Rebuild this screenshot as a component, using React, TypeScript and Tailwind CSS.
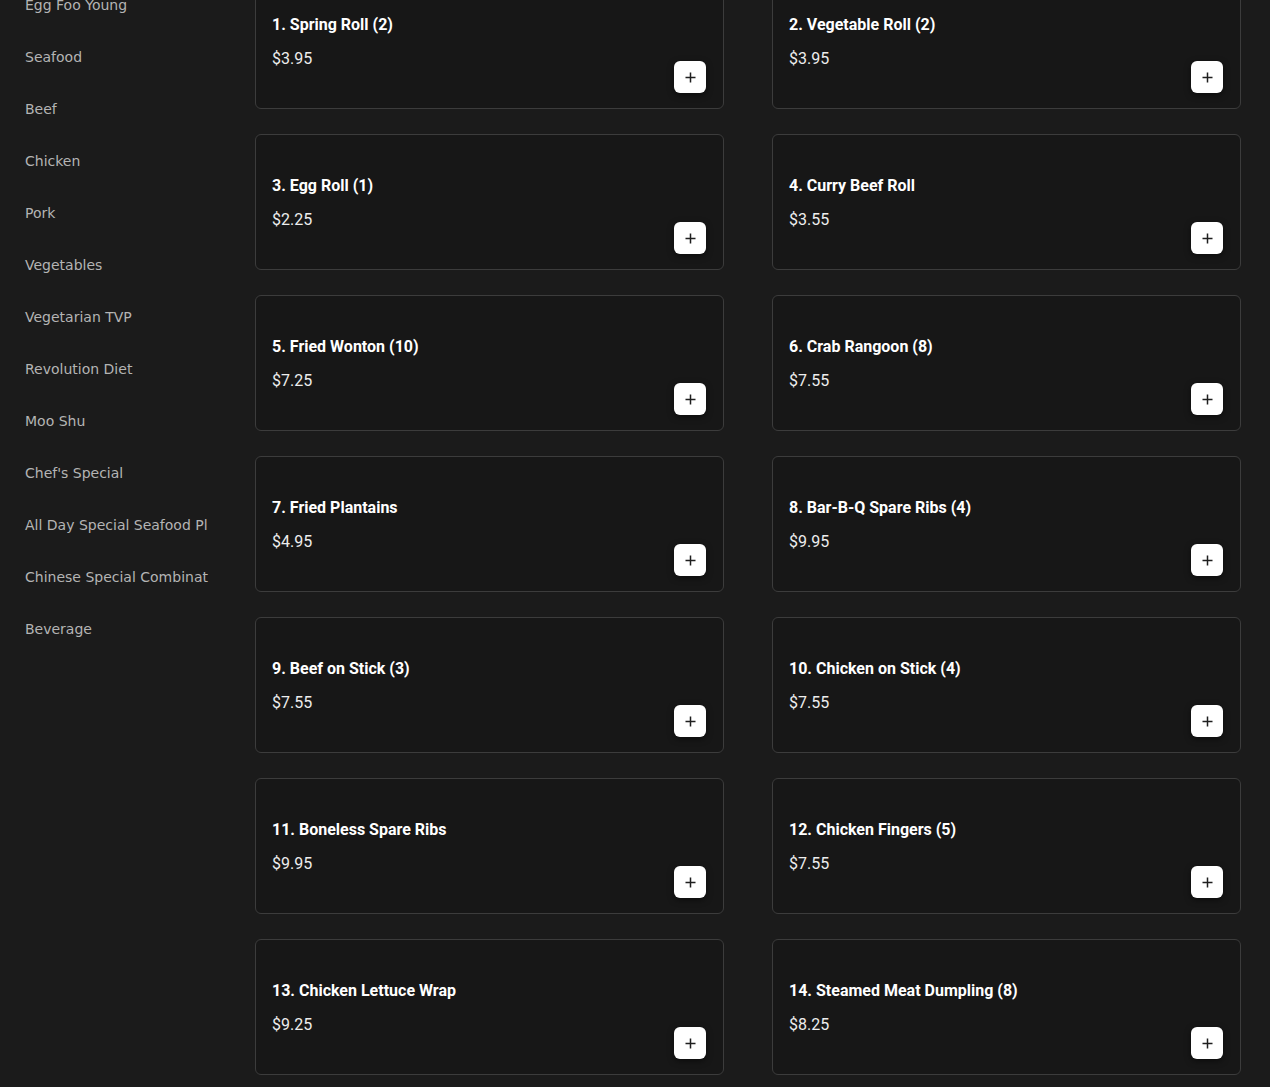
const categories = [
  'Egg Foo Young',
  'Seafood',
  'Beef',
  'Chicken',
  'Pork',
  'Vegetables',
  'Vegetarian TVP',
  'Revolution Diet',
  'Moo Shu',
  "Chef's Special",
  'All Day Special Seafood Pl',
  'Chinese Special Combinat',
  'Beverage',
];

const items = [
  { name: '1. Spring Roll (2)', price: '$3.95' },
  { name: '2. Vegetable Roll (2)', price: '$3.95' },
  { name: '3. Egg Roll (1)', price: '$2.25' },
  { name: '4. Curry Beef Roll', price: '$3.55' },
  { name: '5. Fried Wonton (10)', price: '$7.25' },
  { name: '6. Crab Rangoon (8)', price: '$7.55' },
  { name: '7. Fried Plantains', price: '$4.95' },
  { name: '8. Bar-B-Q Spare Ribs (4)', price: '$9.95' },
  { name: '9. Beef on Stick (3)', price: '$7.55' },
  { name: '10. Chicken on Stick (4)', price: '$7.55' },
  { name: '11. Boneless Spare Ribs', price: '$9.95' },
  { name: '12. Chicken Fingers (5)', price: '$7.55' },
  { name: '13. Chicken Lettuce Wrap', price: '$9.25' },
  { name: '14. Steamed Meat Dumpling (8)', price: '$8.25' },
];

function PlusIcon() {
  return (
    <svg width="11" height="11" viewBox="0 0 11 11" fill="none">
      <path d="M5.5 0.5v10M0.5 5.5h10" stroke="#1f1f1f" strokeWidth="1.5" />
    </svg>
  );
}

export default function App() {
  return (
    <div className="flex min-h-[1087px] bg-[#1b1b1b] font-['DejaVu_Sans',sans-serif]">
      <aside className="w-[231px] shrink-0 pl-[25px] pr-[22px]">
        <ul className="-mt-[21px]">
          {categories.map((c) => (
            <li
              key={c}
              className="whitespace-nowrap py-4 text-sm leading-5 text-[#b4b4b4]"
            >
              {c}
            </li>
          ))}
        </ul>
      </aside>

      <main className="flex-1 pl-6 pr-[29px]">
        <div className="-mt-[27px] grid grid-cols-2 gap-x-12 gap-y-[25px] font-['Roboto',sans-serif]">
          {items.map((item) => (
            <article
              key={item.name}
              className="flex h-[136px] items-end justify-between rounded-md border border-[#3c3c3c] bg-[#171717] pb-[15px] pl-4 pr-[17px]"
            >
              <div className="mb-[22px]">
                <h3 className="text-base font-bold leading-6 text-white">
                  {item.name}
                </h3>
                <p className="mt-[10px] text-base leading-6 text-[#ededed]">
                  {item.price}
                </p>
              </div>
              <button className="flex h-8 w-8 items-center justify-center rounded-md bg-white shadow-[0_2px_6px_rgba(0,0,0,0.5)]">
                <PlusIcon />
              </button>
            </article>
          ))}
        </div>
      </main>
    </div>
  );
}
